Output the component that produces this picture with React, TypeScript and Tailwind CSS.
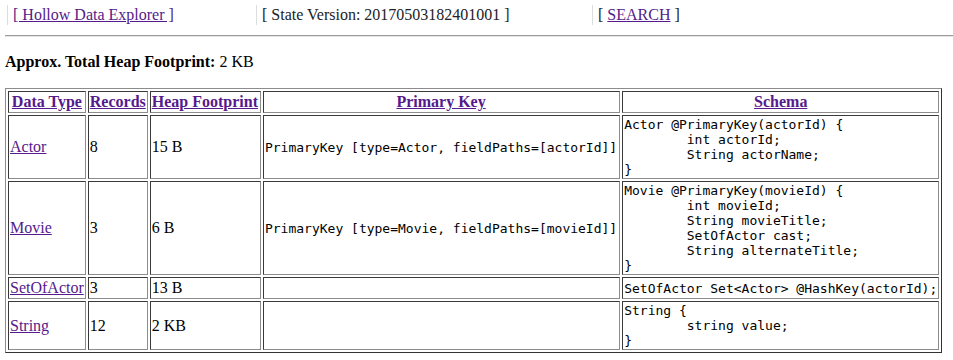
import React from 'react';

const serif = "font-['Liberation_Serif','Times_New_Roman',serif]";
const mono = "font-['DejaVu_Sans_Mono','Liberation_Mono',monospace] text-[13px] leading-[normal]";
const cell =
  'border border-t-[#3a3a3a] border-l-[#3a3a3a] border-b-[#8c8c8c] border-r-[#8c8c8c] p-[1px] align-middle whitespace-nowrap';
const link = 'text-[#551a8b] underline';

type Row = {
  name: string;
  records: string;
  heap: string;
  pk: string;
  schema: string;
};

const rows: Row[] = [
  {
    name: 'Actor',
    records: '8',
    heap: '15 B',
    pk: 'PrimaryKey [type=Actor, fieldPaths=[actorId]]',
    schema: 'Actor @PrimaryKey(actorId) {\n\tint actorId;\n\tString actorName;\n}',
  },
  {
    name: 'Movie',
    records: '3',
    heap: '6 B',
    pk: 'PrimaryKey [type=Movie, fieldPaths=[movieId]]',
    schema:
      'Movie @PrimaryKey(movieId) {\n\tint movieId;\n\tString movieTitle;\n\tSetOfActor cast;\n\tString alternateTitle;\n}',
  },
  {
    name: 'SetOfActor',
    records: '3',
    heap: '13 B',
    pk: '',
    schema: 'SetOfActor Set<Actor> @HashKey(actorId);',
  },
  {
    name: 'String',
    records: '12',
    heap: '2 KB',
    pk: '',
    schema: 'String {\n\tstring value;\n}',
  },
];

// small right paddings nudge the auto column widths to the screenshot
const headers = [
  { label: 'Data Type', pad: '' },
  { label: 'Records', pad: '' },
  { label: 'Heap Footprint', pad: 'pr-[2px]' },
  { label: 'Primary Key', pad: 'pr-[2px]' },
  { label: 'Schema', pad: '' },
];

export default function App() {
  return (
    <div className={`${serif} text-[16px] leading-[normal] text-black bg-white min-h-[360px] pt-[5px]`}>
      {/* top nav */}
      <div className="flex gap-[2px] pl-[7px]">
        <div className="w-[247px] border-l border-[#dddddd] pl-[5px] py-[1px]">
          <a href="#" className={link}>[ Hollow Data Explorer ]</a>
        </div>
        <div className="w-[334px] border-l border-[#dddddd] pl-[5px] py-[1px] text-[#222]">
          [ State Version: 20170503182401001 ]
        </div>
        <div className="flex-1 border-l border-[#dddddd] pl-[5px] py-[1px] text-[#222]">
          [ <a href="#" className={link}>SEARCH</a> ]
        </div>
      </div>

      <hr className="mt-[10px] ml-[5px] h-[2px] border-0 border-t border-b border-t-[#9a9a9a] border-b-[#e6e6e6]" />

      <div className="mt-[16px] ml-[5px]">
        <b>Approx. Total Heap Footprint:</b> 2 KB
      </div>

      <table className="mt-[17px] ml-[5px] border-separate border-spacing-[2px] border border-t-[#8c8c8c] border-l-[#8c8c8c] border-b-[#333] border-r-[#333]">
        <thead>
          <tr>
            {headers.map((h) => (
              <th key={h.label} className={`${cell} ${h.pad} font-bold text-center`}>
                <a href="#" className={link}>{h.label}</a>
              </th>
            ))}
          </tr>
        </thead>
        <tbody>
          {rows.map((r) => (
            <tr key={r.name}>
              <td className={cell}>
                <a href="#" className={link}>{r.name}</a>
              </td>
              <td className={cell}>{r.records}</td>
              <td className={`${cell} pr-[2px]`}>{r.heap}</td>
              <td className={`${cell} pr-[2px] ${mono}`}>{r.pk}</td>
              <td className={cell}>
                <pre className={`${mono} m-0 whitespace-pre [tab-size:8]`}>{r.schema}</pre>
              </td>
            </tr>
          ))}
        </tbody>
      </table>
    </div>
  );
}
